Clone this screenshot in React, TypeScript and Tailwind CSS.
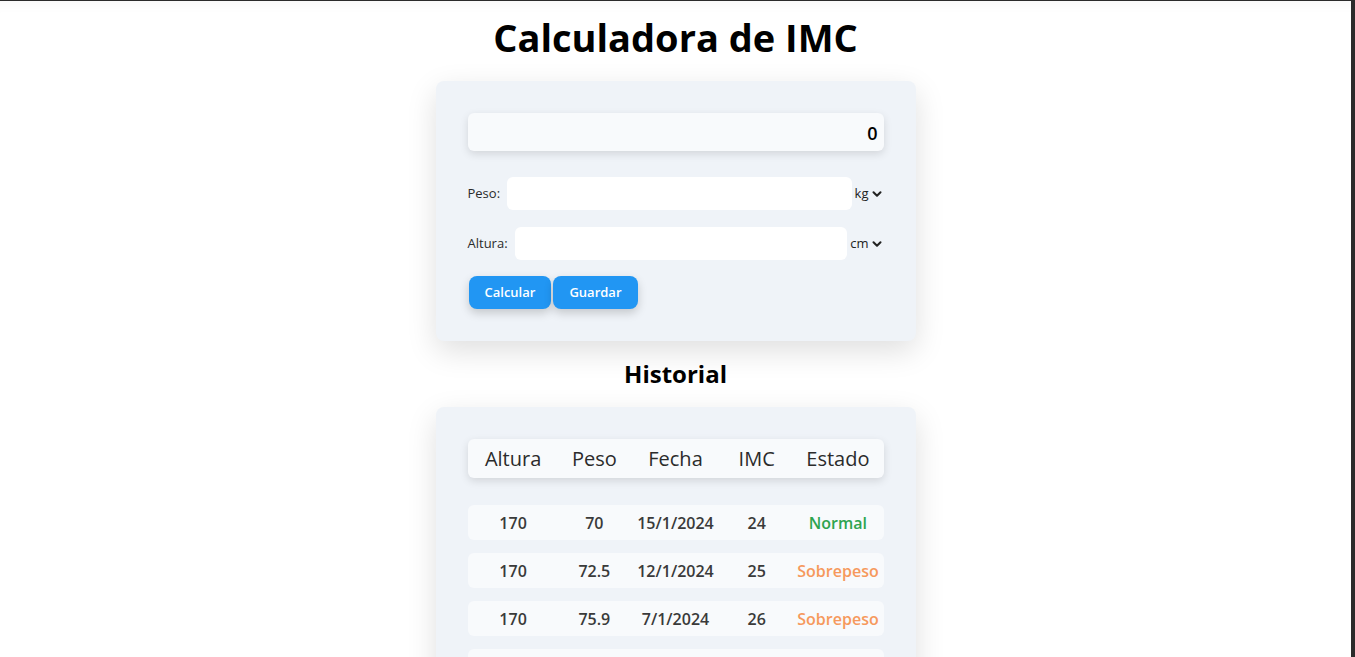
import React from 'react';
import { ChevronDown } from 'lucide-react';

type Registro = {
    altura: number;
    peso: number;
    fecha: string;
    imc: number;
    estado: string;
};

const historial: Registro[] = [
    { altura: 170, peso: 70, fecha: '15/1/2024', imc: 24, estado: 'Normal' },
    { altura: 170, peso: 72.5, fecha: '12/1/2024', imc: 25, estado: 'Sobrepeso' },
    { altura: 170, peso: 75.9, fecha: '7/1/2024', imc: 26, estado: 'Sobrepeso' },
    { altura: 170, peso: 78, fecha: '1/1/2024', imc: 27, estado: 'Sobrepeso' },
];

const estadoColor = (estado: string) =>
    estado === 'Normal' ? 'text-[#2ea44f]' : 'text-[#f6995c]';

const UnitSelect: React.FC<{ unit: string }> = ({ unit }) => (
    <div className="flex items-center gap-px pl-[3px] text-[13px] text-[#222]">
        <span>{unit}</span>
        <ChevronDown size={14} strokeWidth={3.5} />
    </div>
);

const Field: React.FC<{ label: string; unit: string }> = ({ label, unit }) => (
    <div className="flex items-center">
        <label className="text-[13px] text-[#2b2b2b] mr-[7px]">{label}</label>
        <input className="flex-1 h-[33px] bg-white rounded-md outline-none px-2" />
        <UnitSelect unit={unit} />
    </div>
);

const App: React.FC = () => {
    return (
        <div className="h-screen overflow-hidden bg-[#2b2b2b] pt-px pr-[4px] font-['Open_Sans',sans-serif]">
            <main className="h-full bg-white shadow-[inset_0_14px_14px_-12px_rgba(0,0,0,0.04)] flex flex-col items-center">
                <h1 className="pt-[10px] mb-[18px] text-[38px] leading-[52px] font-bold text-black">Calculadora de IMC</h1>

                <section className="w-[480px] p-8 rounded-lg bg-[#eff3f8] shadow-[0_10px_30px_rgba(0,0,0,0.13)]">
                    <div className="h-[38px] flex items-center justify-end pr-[6px] rounded-md bg-[#f8fafc] shadow-[0_3px_8px_rgba(0,0,0,0.12)] text-lg font-semibold text-black">
                        <span className="translate-y-px">0</span>
                    </div>
                    <div className="mt-[26px] flex flex-col gap-[17px]">
                        <Field label="Peso:" unit="kg" />
                        <Field label="Altura:" unit="cm" />
                    </div>
                    <div className="mt-[16px] flex gap-[2px] pl-px">
                        <button className="h-[33px] px-4 rounded-lg bg-[#2196f3] text-white text-[13px] font-semibold shadow-[0_4px_10px_rgba(0,0,0,0.18)]">Calcular</button>
                        <button className="h-[33px] px-4 rounded-lg bg-[#2196f3] text-white text-[13px] font-semibold shadow-[0_4px_10px_rgba(0,0,0,0.18)]">Guardar</button>
                    </div>
                </section>

                <h2 className="mt-[17px] mb-[17px] text-2xl leading-8 font-bold text-black">Historial</h2>

                <section className="w-[480px] p-8 rounded-lg bg-[#eff3f8] shadow-[0_10px_30px_rgba(0,0,0,0.13)]">
                    <div className="h-[39px] grid grid-cols-5 items-center px-[5px] rounded-md bg-[#f8fafc] shadow-[0_3px_8px_rgba(0,0,0,0.12)] text-xl font-medium text-[#2b2b2b] text-center">
                        <span>Altura</span>
                        <span>Peso</span>
                        <span>Fecha</span>
                        <span>IMC</span>
                        <span>Estado</span>
                    </div>
                    <div className="mt-[27px] flex flex-col gap-[13px]">
                        {historial.map((r, i) => (
                            <div key={i} className="h-[35px] grid grid-cols-5 items-center px-[5px] rounded-md bg-[#f8fafc] text-base font-semibold text-[#3a3a3a] text-center">
                                <span>{r.altura}</span>
                                <span>{r.peso}</span>
                                <span>{r.fecha}</span>
                                <span>{r.imc}</span>
                                <span className={estadoColor(r.estado)}>{r.estado}</span>
                            </div>
                        ))}
                    </div>
                </section>
            </main>
        </div>
    );
};

export default App;
